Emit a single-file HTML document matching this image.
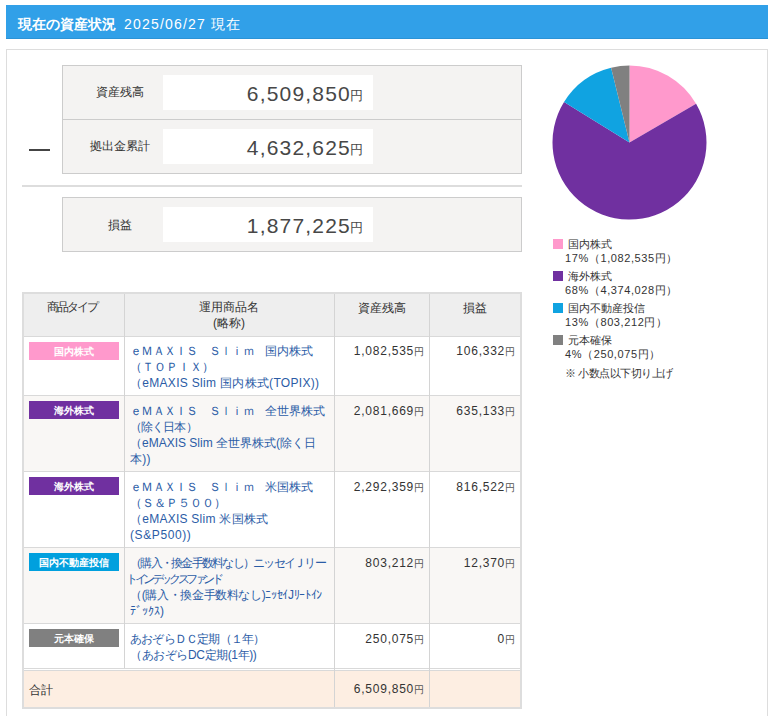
<!DOCTYPE html>
<html><head><meta charset="utf-8">
<style>
*{box-sizing:border-box;margin:0;padding:0}
html,body{width:774px;height:716px;overflow:hidden;background:#fff}
body{font-family:"Liberation Sans",sans-serif;color:#333;position:relative}
.abs{position:absolute}
#hdr{left:6px;top:5px;width:762px;height:34px;background:#31a0e8;color:#fff;border-bottom:1px solid #2b93d6}
#hdr .t1{position:absolute;left:12px;top:11px;font-size:14px;font-weight:bold;line-height:16px}
#hdr .t2{position:absolute;left:118px;top:11px;font-size:14px;line-height:16px;letter-spacing:1.2px}
#outer{left:6px;top:49px;width:762px;height:700px;border:1px solid #ddd}
.sbox{position:absolute;left:62px;width:460px;background:#f4f3f2;border:1px solid #ccc}
.srow{position:absolute;left:0;width:458px;height:53px}
.slabel{position:absolute;left:7px;width:100px;text-align:center;top:18px;font-size:12px;line-height:16px;color:#333}
.sval{position:absolute;left:100px;width:210px;height:35px;top:9px;background:#fff;text-align:right;padding-right:10px;font-size:21px;line-height:38px;color:#474747;letter-spacing:1.2px}
.sval small{font-size:13px;letter-spacing:0;margin-left:-1px;vertical-align:1px}
#dash{left:29px;top:149px;width:21px;height:2px;background:#444}
#sep{left:22px;top:185px;width:500px;height:2px;background:#ddd}
#pie{left:552px;top:65px;width:155px;height:155px}
.leg{position:absolute;left:553px;font-size:11px;line-height:14px;color:#333}
.leg .sq{position:absolute;left:0;top:0;width:10px;height:10px}
.leg .l1{position:absolute;left:15px;top:-2px;white-space:nowrap}
.leg .l2{position:absolute;left:12px;top:12px;white-space:nowrap;letter-spacing:0.6px}
#tbl{left:22px;top:292px;width:500px;height:417px;border:2px solid #ddd;background:#fff}
.row{position:absolute;left:0;width:496px}
.vl{position:absolute;top:0;width:1px;background:#d4d4d4}
.hl{position:absolute;left:24px;width:496px;height:1px;background:#d9d9d9}
.badge{position:absolute;left:5px;width:90px;height:18px;color:#fff;font-size:10px;line-height:20px;text-align:center;font-weight:bold}
.nm{position:absolute;white-space:nowrap;font-size:12px;line-height:16px;color:#2b5ca6}
.num{position:absolute;white-space:nowrap;font-size:12px;line-height:16px;text-align:right;color:#333;letter-spacing:0.75px}
.num small{font-size:10px;letter-spacing:0;margin-left:0px;color:#555}
.th{position:absolute;font-size:12px;line-height:16px;text-align:center;color:#333}
</style></head><body>
<div id="hdr" class="abs"><span class="t1">現在の資産状況</span><span class="t2">2025/06/27 現在</span></div>
<div id="outer" class="abs"></div>

<div class="sbox" style="top:65px;height:109px">
  <div class="srow" style="top:0"><div class="slabel">資産残高</div><div class="sval">6,509,850<small>円</small></div></div>
  <div class="abs" style="left:0;top:53px;width:458px;height:1px;background:#ccc"></div>
  <div class="srow" style="top:54px"><div class="slabel">拠出金累計</div><div class="sval">4,632,625<small>円</small></div></div>
</div>
<div id="dash" class="abs"></div>
<div id="sep" class="abs"></div>
<div class="sbox" style="top:197px;height:55px">
  <div class="srow" style="top:0"><div class="slabel" style="top:19px">損益</div><div class="sval">1,877,225<small>円</small></div></div>
</div>

<svg id="pie" class="abs" viewBox="0 0 155 155"><path fill="#ff99cc" d="M77.5 77.5L77.50 0.50A77 77 0 0 1 144.09 38.84Z"/><path fill="#7030a0" d="M77.5 77.5L144.09 38.84A77 77 0 1 1 12.02 36.98Z"/><path fill="#10a3e1" d="M77.5 77.5L12.02 36.98A77 77 0 0 1 59.09 2.73Z"/><path fill="#808080" d="M77.5 77.5L59.09 2.73A77 77 0 0 1 77.50 0.50Z"/></svg>

<div class="leg" style="top:239px"><div class="sq" style="background:#ff99cc"></div><div class="l1">国内株式</div><div class="l2">17%（1,082,535円）</div></div>
<div class="leg" style="top:271px"><div class="sq" style="background:#7030a0"></div><div class="l1">海外株式</div><div class="l2">68%（4,374,028円）</div></div>
<div class="leg" style="top:303px"><div class="sq" style="background:#10a3e1"></div><div class="l1">国内不動産投信</div><div class="l2">13%（803,212円）</div></div>
<div class="leg" style="top:335px"><div class="sq" style="background:#808080"></div><div class="l1">元本確保</div><div class="l2">4%（250,075円）</div></div>
<div class="leg" style="top:366px"><div class="l2" style="top:0;left:12px;letter-spacing:-0.5px">※ 小数点以下切り上げ</div></div>

<!--TBL-->
<div id="tbl" class="abs"></div>
<div class="abs" style="left:24px;top:294px;width:496px;height:42px;background:#eee"></div>
<div class="abs" style="left:24px;top:337px;width:496px;height:58px;background:#fff"></div>
<div class="hl" style="top:336px"></div>
<div class="abs" style="left:24px;top:396px;width:496px;height:75px;background:#f9f7f5"></div>
<div class="hl" style="top:395px"></div>
<div class="abs" style="left:24px;top:472px;width:496px;height:75px;background:#fff"></div>
<div class="hl" style="top:471px"></div>
<div class="abs" style="left:24px;top:548px;width:496px;height:75px;background:#f9f7f5"></div>
<div class="hl" style="top:547px"></div>
<div class="abs" style="left:24px;top:624px;width:496px;height:44px;background:#fff"></div>
<div class="hl" style="top:623px"></div>
<div class="hl" style="top:668px"></div>
<div class="hl" style="top:670px"></div>
<div class="abs" style="left:24px;top:671px;width:496px;height:36px;background:#fdeee2"></div>
<div class="vl" style="left:124px;top:294px;height:374px"></div>
<div class="vl" style="left:334px;top:294px;height:413px"></div>
<div class="vl" style="left:429px;top:294px;height:413px"></div>
<div class="th" style="left:21px;width:100px;top:299px;letter-spacing:-2px;text-indent:2px">商品タイプ</div>
<div class="th" style="left:124px;width:210px;top:299px">運用商品名<br>(略称)</div>
<div class="th" style="left:334px;width:95px;top:300px">資産残高</div>
<div class="th" style="left:429px;width:92px;top:300px">損益</div>
<div class="badge" style="left:29px;top:342px;background:#ff99cc">国内株式</div>
<div class="nm" style="left:130px;top:343px"><span style="letter-spacing:-0.75px">ｅＭＡＸＩＳ　Ｓｌｉｍ　</span>国内株式<br>（ＴＯＰＩＸ）<br><span style="letter-spacing:0.3px">（eMAXIS Slim 国内株式(TOPIX))</span></div>
<div class="num" style="left:334px;width:90px;top:343px">1,082,535<small>円</small></div>
<div class="num" style="left:429px;width:86px;top:343px">106,332<small>円</small></div>
<div class="badge" style="left:29px;top:401px;background:#7030a0">海外株式</div>
<div class="nm" style="left:130px;top:403px"><span style="letter-spacing:-0.75px">ｅＭＡＸＩＳ　Ｓｌｉｍ　</span>全世界株式<br><span style="letter-spacing:-0.9px">（除く日本）</span><br>（eMAXIS Slim 全世界株式(除く日<br><span style="letter-spacing:0.3px">本))</span></div>
<div class="num" style="left:334px;width:90px;top:403px">2,081,669<small>円</small></div>
<div class="num" style="left:429px;width:86px;top:403px">635,133<small>円</small></div>
<div class="badge" style="left:29px;top:477px;background:#7030a0">海外株式</div>
<div class="nm" style="left:130px;top:479px"><span style="letter-spacing:-0.75px">ｅＭＡＸＩＳ　Ｓｌｉｍ　</span>米国株式<br>（Ｓ＆Ｐ５００）<br><span style="letter-spacing:0.25px">（eMAXIS Slim 米国株式</span><br><span style="letter-spacing:0.6px">(S&amp;P500))</span></div>
<div class="num" style="left:334px;width:90px;top:479px">2,292,359<small>円</small></div>
<div class="num" style="left:429px;width:86px;top:479px">816,522<small>円</small></div>
<div class="badge" style="left:29px;top:553px;background:#00a0de">国内不動産投信</div>
<div class="nm" style="left:130px;top:555px"><span style="letter-spacing:-1.75px">（購入・換金手数料なし）ニッセイＪリー</span><br><span style="letter-spacing:-3.4px"><span style="margin-left:-4px">トインデックスファンド</span></span><br><span style="letter-spacing:-0.35px">（(購入・換金手数料なし)ﾆｯｾｲJﾘｰﾄｲﾝ</span><br>ﾃﾞｯｸｽ)</div>
<div class="num" style="left:334px;width:90px;top:555px">803,212<small>円</small></div>
<div class="num" style="left:429px;width:86px;top:555px">12,370<small>円</small></div>
<div class="badge" style="left:29px;top:629px;background:#808080">元本確保</div>
<div class="nm" style="left:130px;top:631px"><span style="letter-spacing:-0.8px">あおぞらＤＣ定期（１年）</span><br><span style="letter-spacing:-0.4px">（あおぞらDC定期(1年))</span></div>
<div class="num" style="left:334px;width:90px;top:631px">250,075<small>円</small></div>
<div class="num" style="left:429px;width:86px;top:631px">0<small>円</small></div>
<div class="th" style="left:29px;top:682px;text-align:left">合計</div>
<div class="num" style="left:334px;width:90px;top:681px">6,509,850<small>円</small></div>
<!--/TBL-->
</body></html>
